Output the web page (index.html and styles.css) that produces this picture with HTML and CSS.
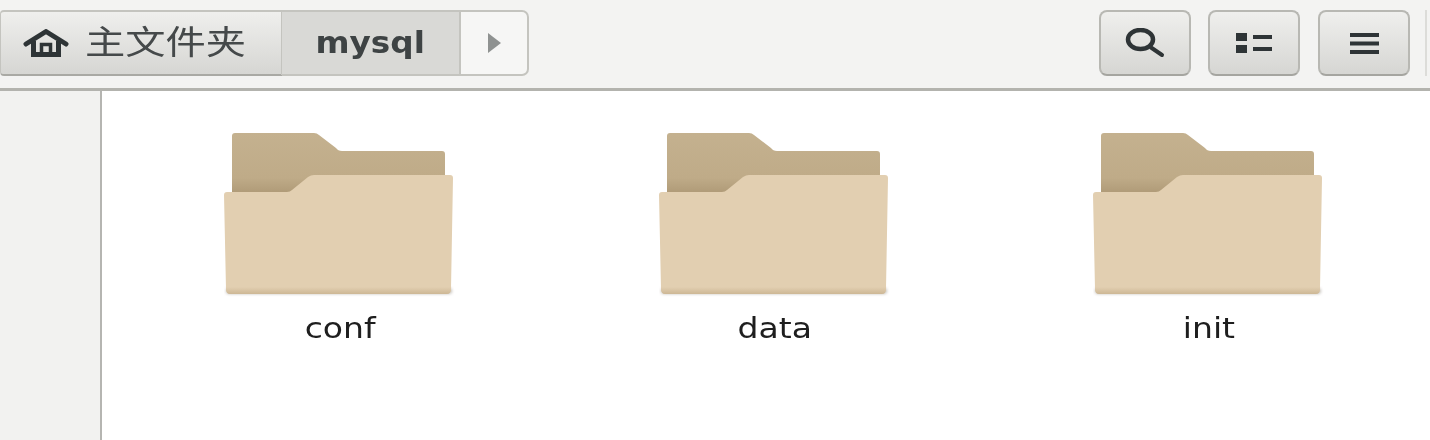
FILE: index.html
```html
<!DOCTYPE html>
<html lang="zh-CN">

<head>
  <meta charset="UTF-8">
  <title>mysql</title>
  <link rel="stylesheet" href="styles.css">
</head>

<body>

  <!-- Toolbar -->
  <header class="toolbar">
    <div class="pathbar">
      <div class="crumb crumb-home">
        <svg class="home-icon" viewBox="0 0 46 28" width="46" height="28">
          <path d="M3 15 L23 2.5 L43 15" fill="none" stroke="#2e3436" stroke-width="5" stroke-linejoin="round" stroke-linecap="round"/>
          <path d="M10.5 12 V25.5 H35.5 V12" fill="none" stroke="#2e3436" stroke-width="5"/>
          <path d="M18.5 25 V15.5 H27.5 V25" fill="none" stroke="#2e3436" stroke-width="3.5"/>
        </svg>
        <span class="home-label">主文件夹</span>
      </div>
      <div class="crumb crumb-current"><span class="current-label">mysql</span></div>
      <div class="crumb crumb-next"><span class="arrow"></span></div>
    </div>
    <div class="actions">
      <button class="tool-btn">
        <svg viewBox="0 0 40 30" width="40" height="30">
          <ellipse cx="15.5" cy="11.5" rx="12.5" ry="9.5" fill="none" stroke="#2e3436" stroke-width="4.5"/>
          <path d="M26 19.5 L37 27" stroke="#2e3436" stroke-width="4" stroke-linecap="round"/>
        </svg>
      </button>
      <button class="tool-btn">
        <svg viewBox="0 0 36 20" width="36" height="20">
          <rect x="0" y="0" width="11" height="8" fill="#2e3436"/>
          <rect x="0" y="12" width="11" height="8" fill="#2e3436"/>
          <rect x="17" y="2" width="19" height="4" fill="#2e3436"/>
          <rect x="17" y="14" width="19" height="4" fill="#2e3436"/>
        </svg>
      </button>
      <button class="tool-btn">
        <svg viewBox="0 0 29 21" width="29" height="21">
          <rect x="0" y="0" width="29" height="4" fill="#2e3436"/>
          <rect x="0" y="8.5" width="29" height="4" fill="#2e3436"/>
          <rect x="0" y="17" width="29" height="4" fill="#2e3436"/>
        </svg>
      </button>
      <div class="toolbar-sep"></div>
    </div>
  </header>

  <!-- Main Content -->
  <main class="content">
    <aside class="sidebar"></aside>
    <section class="files">
      <div class="file">
        <svg class="folder" viewBox="0 0 232 168" width="232" height="168">
          <use href="#folder-shape"/>
        </svg>
        <div class="file-name">conf</div>
      </div>
      <div class="file">
        <svg class="folder" viewBox="0 0 232 168" width="232" height="168">
          <use href="#folder-shape"/>
        </svg>
        <div class="file-name">data</div>
      </div>
      <div class="file">
        <svg class="folder" viewBox="0 0 232 168" width="232" height="168">
          <use href="#folder-shape"/>
        </svg>
        <div class="file-name">init</div>
      </div>
    </section>
  </main>

  <svg class="defs" width="0" height="0">
    <defs>
      <linearGradient id="back" x1="0" y1="0" x2="0" y2="1">
        <stop offset="0" stop-color="#c4b18f"/>
        <stop offset="0.7" stop-color="#bfab88"/>
        <stop offset="1" stop-color="#ab9673"/>
      </linearGradient>
      <linearGradient id="lip" x1="0" y1="0" x2="0" y2="1">
        <stop offset="0" stop-color="#e2cfb1"/>
        <stop offset="1" stop-color="#cdb795"/>
      </linearGradient>
      <filter id="soft" x="-5%" y="-50%" width="110%" height="200%">
        <feGaussianBlur stdDeviation="1.5"/>
      </filter>
      <g id="folder-shape">
        <rect x="2" y="157" width="226" height="6" rx="3" fill="#8f8474" opacity="0.5" filter="url(#soft)"/>
        <path d="M8 66 V5 Q8 2 11 2 H90 Q93 2 95 4 L112 17 Q114 20 118 20 H218 Q221 20 221 23 V66 Z" fill="url(#back)"/>
        <path d="M0 64 Q0 61 3 61 H63 Q66 61 68 59 L84 46 Q87 44 90 44 H226 Q229 44 229 47 L227 158 Q227 162 223 162 H6 Q2 162 2 158 Z" fill="#e2cfb1"/>
        <path d="M2 156 H227.1 L227 158 Q227 163 223 163 H6 Q2 163 2 158 Z" fill="url(#lip)"/>
      </g>
    </defs>
  </svg>

</body>

</html>
```

FILE: styles.css
```css
* {
  margin: 0;
  padding: 0;
  box-sizing: border-box;
}

body {
  width: 1430px;
  height: 440px;
  overflow: hidden;
  font-family: "DejaVu Sans", "Noto Sans CJK SC", sans-serif;
  background: #fff;
  color: #2e3436;
  display: flex;
  flex-direction: column;
}

/* Toolbar */
.toolbar {
  height: 91px;
  flex-shrink: 0;
  padding: 10px 0 12px;
  background: #f3f3f2;
  border-bottom: 3px solid #b3b3ae;
  display: flex;
  justify-content: space-between;
  filter: blur(0.7px);
}

.pathbar {
  display: flex;
  height: 66px;
}

.crumb {
  display: flex;
  align-items: center;
  justify-content: center;
  border: 2px solid #c4c4bf;
  border-left: none;
}

.crumb-home {
  width: 283px;
  justify-content: flex-start;
  gap: 16px;
  padding-left: 22px;
  color: #45494a;
  background: linear-gradient(#efefed, #d6d6d3);
  border-bottom-color: #a9a9a4;
  border-left: 1px solid #c4c4bf;
  border-radius: 4px 0 0 4px;
}

.home-icon {
  flex-shrink: 0;
}

/* the screenshot is stretched sideways, so the labels are too */
.home-label {
  display: inline-block;
  width: 131px;
  font-size: 33px;
  line-height: 40px;
  transform: scaleX(1.22);
  transform-origin: left center;
  white-space: nowrap;
}

.crumb-current {
  width: 179px;
  margin-left: -1px;
  background: #d9d9d6;
  color: #3e4344;
}

.current-label {
  font-size: 30px;
  font-weight: 700;
  line-height: 40px;
  transform: scaleX(1.09);
}

.crumb-next {
  width: 68px;
  background: #f6f6f5;
  border-radius: 0 7px 7px 0;
}

.arrow {
  width: 0;
  height: 0;
  border-left: 13px solid #8f9291;
  border-top: 10px solid transparent;
  border-bottom: 10px solid transparent;
}

.actions {
  display: flex;
  height: 66px;
  gap: 17px;
}

.tool-btn {
  width: 92px;
  height: 66px;
  display: flex;
  align-items: center;
  justify-content: center;
  border: 2px solid #b8b8b3;
  border-bottom-color: #a5a5a0;
  border-radius: 8px;
  background: linear-gradient(#efefed, #d6d6d3);
}

.tool-btn:nth-child(3) {
  margin-left: 1px;
}

.toolbar-sep {
  width: 2px;
  margin-left: -2px;
  margin-right: 3px;
  background: #dcdcd9;
}

/* Main Content */
.content {
  flex: 1;
  display: flex;
  min-height: 0;
}

.sidebar {
  width: 102px;
  flex-shrink: 0;
  background: #f2f2f0;
  border-right: 2px solid #b5b5b1;
}

.files {
  flex: 1;
  display: flex;
  padding: 40px 0 0 21px;
}

.file {
  width: 434.5px;
  display: flex;
  flex-direction: column;
  align-items: center;
}

.folder {
  display: block;
  filter: blur(0.7px);
}

.file-name {
  margin-top: 9px;
  font-size: 29px;
  line-height: 40px;
  color: #1e1e1e;
  transform: scaleX(1.14);
  filter: blur(0.6px);
}

.defs {
  position: absolute;
}
```
